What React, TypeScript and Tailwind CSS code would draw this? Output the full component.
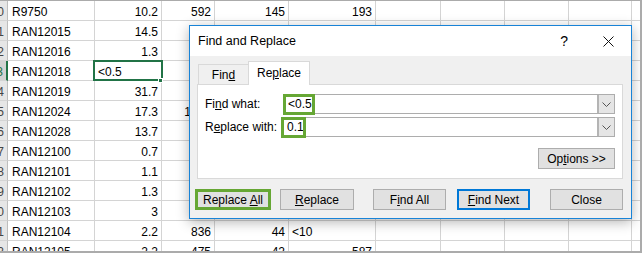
import React from "react";

type Row = {
  n: string;
  a: string;
  b?: string;
  c?: string;
  d?: string;
  e?: string;
  eLeft?: boolean;
  selected?: boolean;
};

const rows: Row[] = [
  { n: "10", a: "R9750", b: "10.2", c: "592", d: "145", e: "193" },
  { n: "11", a: "RAN12015", b: "14.5" },
  { n: "12", a: "RAN12016", b: "1.3" },
  { n: "13", a: "RAN12018", b: "<0.5", selected: true },
  { n: "14", a: "RAN12019", b: "31.7" },
  { n: "15", a: "RAN12024", b: "17.3", c: "1250" },
  { n: "16", a: "RAN12028", b: "13.7" },
  { n: "17", a: "RAN12100", b: "0.7" },
  { n: "18", a: "RAN12101", b: "1.1" },
  { n: "19", a: "RAN12102", b: "1.3" },
  { n: "20", a: "RAN12103", b: "3" },
  { n: "21", a: "RAN12104", b: "2.2", c: "836", d: "44", e: "<10", eLeft: true },
  { n: "22", a: "RAN12105", b: "2.2", c: "475", d: "42", e: "587" },
];

const cell = "h-[20px] border-b border-r border-[#d4d4d4] flex items-end pb-[1px] leading-[14px] overflow-hidden whitespace-nowrap";
const num = `${cell} justify-end pr-[3px]`;
const txt = `${cell} pl-[3px]`;

const SheetRow = ({ r }: { r: Row }) => (
  <>
    <div
      className={`h-[20px] border-b border-[#d4d4d4] flex items-end justify-end pr-[3px] pb-[1px] leading-[14px] overflow-hidden ${
        r.selected
          ? "bg-[#d2d2d2] text-[#217346] border-r-2 border-r-[#217346]"
          : "bg-[#e6e6e6] text-[#444] border-r border-r-[#bdbdbd]"
      }`}
    >
      {r.n}
    </div>
    <div className={`${txt} pl-[4px]`}>{r.a}</div>
    {r.selected ? (
      <div className={`${txt} relative overflow-visible pl-[2px]`}>
        {r.b}
        <span className="absolute left-[-2px] top-[-1px] w-[70px] h-[21px] border-2 border-[#217346]" />
        <span className="absolute right-[-2px] bottom-[-3px] w-[5px] h-[5px] bg-[#217346] border border-white" />
      </div>
    ) : (
      <div className={num}>{r.b}</div>
    )}
    <div className={num}>{r.c}</div>
    <div className={num}>{r.d}</div>
    <div className={r.eLeft ? `${txt} pl-[2px]` : num}>{r.e}</div>
    <div className={cell} />
    <div className={cell} />
    <div className={cell} />
    <div className={cell} />
    <div className="h-[20px] border-b border-[#d4d4d4]" />
  </>
);

const Btn = ({
  children,
  className = "",
  border = "border border-[#adadad]",
}: {
  children: React.ReactNode;
  className?: string;
  border?: string;
}) => (
  <div className={`h-[21px] flex items-center justify-center bg-[#e1e1e1] text-black ${border} ${className}`}>
    <span>{children}</span>
  </div>
);

const Chevron = () => (
  <div className="w-[17px] h-full bg-[#e5e5e5] border-l-2 border-[#b4b4b4] flex items-center justify-center">
    <svg width="9" height="5" viewBox="0 0 9 5">
      <path d="M0.5 0.5 L4.5 4.5 L8.5 0.5" fill="none" stroke="#555" strokeWidth="1" />
    </svg>
  </div>
);

export default function App() {
  return (
    <div className="relative w-[642px] h-[253px] overflow-hidden bg-white border-t border-t-[#ababab] border-r-2 border-r-[#ababab] border-b-2 border-b-[#ababab] font-['Liberation_Sans',Arial,sans-serif] text-[12px] text-black">
      <div className="grid grid-cols-[8px_87px_67px_53px_74px_87px_65px_64px_64px_63px_8px]">
        {rows.map((r) => (
          <SheetRow key={r.n} r={r} />
        ))}
      </div>

      {/* dialog */}
      <div className="absolute left-[189px] top-[24px] w-[443px] h-[194px] border border-[#1883d7] bg-[#f0f0f0] flex flex-col shadow-[0_3px_12px_rgba(0,0,0,0.3)]">
        <div className="h-[30px] bg-white flex items-center pl-[8px]">
          <span className="text-[12.5px]">Find and Replace</span>
          <span className="ml-auto mr-[35px] text-[14px]">?</span>
          <svg width="11" height="11" viewBox="0 0 11 11" className="mr-[17px]">
            <path d="M0.5 0.5 L10.5 10.5 M10.5 0.5 L0.5 10.5" stroke="#111" strokeWidth="1" />
          </svg>
        </div>

        <div className="flex items-end ml-[8px] mt-[6px] h-[22px]">
          <div className="h-[20px] w-[51px] border border-b-0 border-[#d9d9d9] flex items-center justify-center">
            <span>
              Fin<u>d</u>
            </span>
          </div>
          <div className="relative z-10 h-[22px] w-[60px] -ml-px bg-white border border-b-0 border-[#d9d9d9] flex items-center justify-center -mb-px pb-px box-content">
            <span>
              Re<u>p</u>lace
            </span>
          </div>
        </div>

        <div className="ml-[7px] mr-[8px] h-[95px] bg-white border border-[#d9d9d9] flex flex-col pt-[9px] pl-[7px] pr-[7px]">
          <div className="flex items-center h-[20px]">
            <span className="w-[78px]">
              Fi<u>n</u>d what:
            </span>
            <div className="relative flex-1 h-[20px] border border-[#adadad] flex items-center">
              <span className="flex-1 pl-[4px]">&lt;0.5</span>
              <Chevron />
              <span className="absolute left-[-1px] top-[-1px] w-[32px] h-[21px] border-[3px] border-[#66a734]" />
            </div>
          </div>
          <div className="flex items-center h-[20px] mt-[3px]">
            <span className="w-[78px]">
              R<u>e</u>place with:
            </span>
            <div className="relative flex-1 h-[20px] border border-[#adadad] flex items-center">
              <span className="flex-1 pl-[3px]">0.1</span>
              <Chevron />
              <span className="absolute left-[-3px] top-[-1px] w-[25px] h-[21px] border-[3px] border-[#66a734]" />
            </div>
          </div>
          <div className="flex justify-end mt-[11px]">
            <Btn className="w-[77px]">
              Op<u>t</u>ions &gt;&gt;
            </Btn>
          </div>
        </div>

        <div className="flex mt-[10px]">
          <Btn className="ml-[5px] w-[76px]" border="border-[3px] border-[#66a734]">
            Replace <u>A</u>ll
          </Btn>
          <Btn className="ml-[9px] w-[74px]">
            <u>R</u>eplace
          </Btn>
          <Btn className="ml-[19px] w-[73px]">
            F<u>i</u>nd All
          </Btn>
          <Btn className="ml-[11px] w-[73px]" border="border-2 border-[#0078d7]">
            <u>F</u>ind Next
          </Btn>
          <Btn className="ml-[20px] w-[73px]">Close</Btn>
        </div>
      </div>
    </div>
  );
}
